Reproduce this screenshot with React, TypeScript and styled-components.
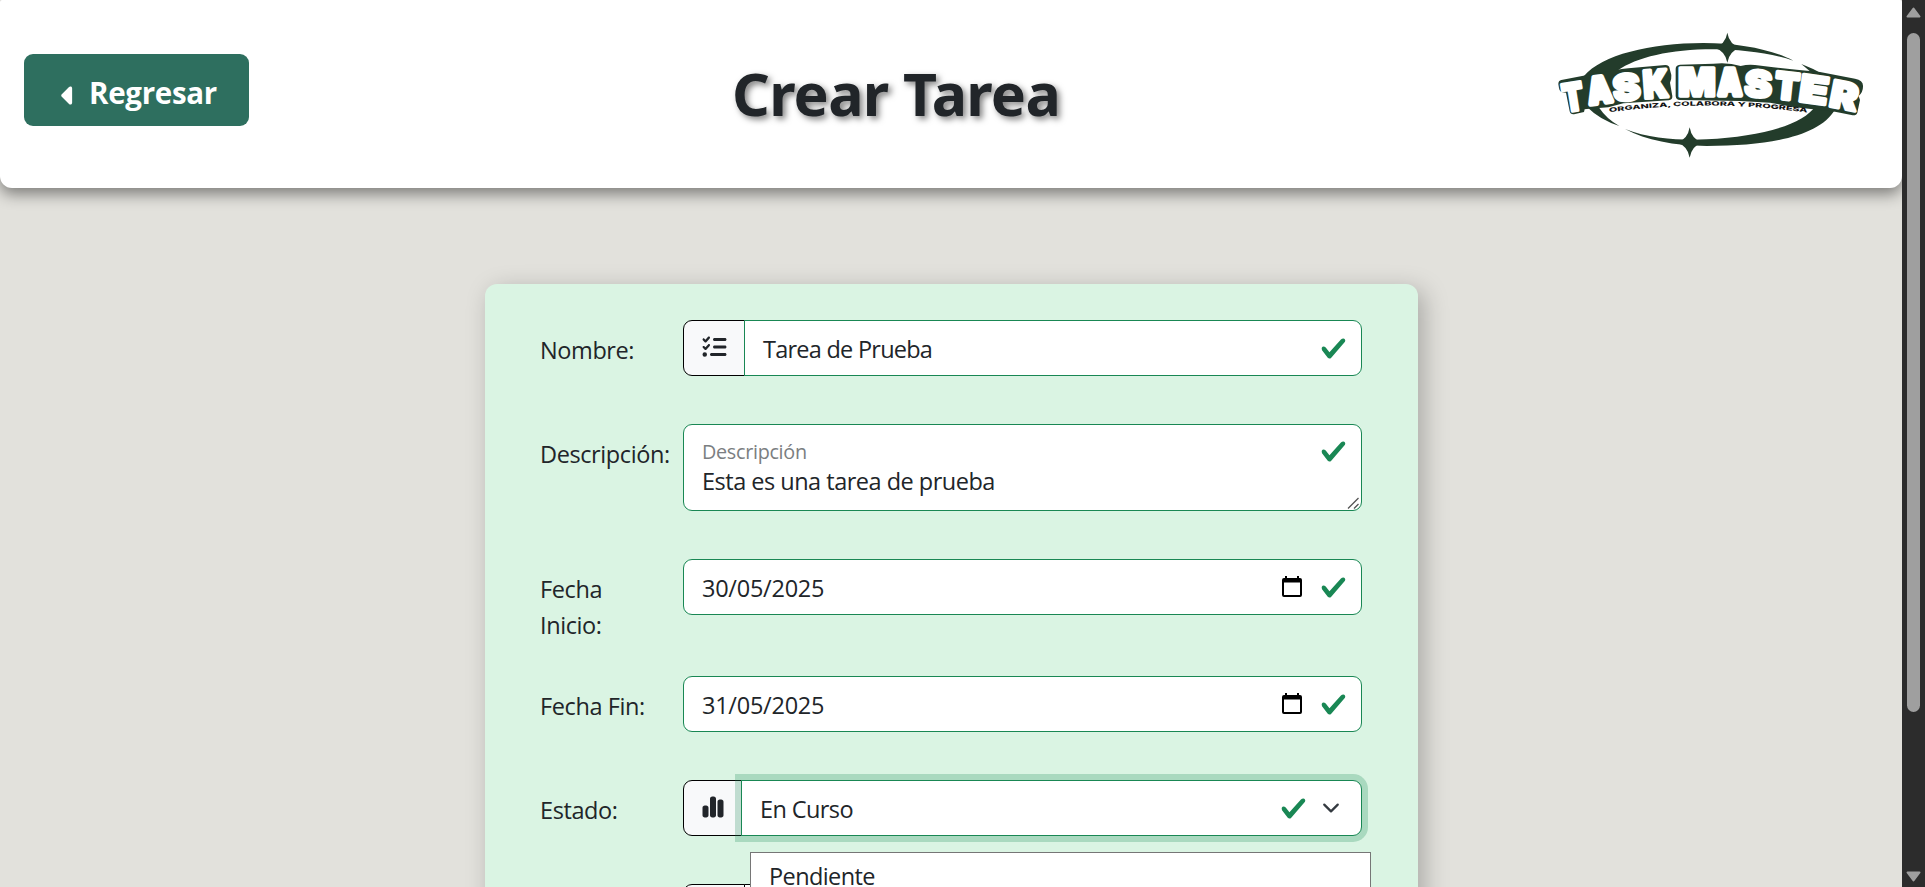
import React from 'react';
import styled, { createGlobalStyle, css } from 'styled-components';
import { FaCaretLeft, FaChartSimple, FaListCheck } from 'react-icons/fa6';

const GREEN = '#198754';
const INK = '#212529';
const LOGO_GREEN = '#233c2b';

const GlobalStyle = createGlobalStyle`
  *, *::before, *::after { box-sizing: border-box; }
  body {
    margin: 0;
    overflow: hidden;
    background: #e2e1dc;
    color: ${INK};
    font-family: 'Open Sans', 'Noto Sans', sans-serif;
    font-size: 23.5px;
    letter-spacing: -0.4px;
    line-height: 36px;
  }
`;

const Frame = styled.div`
  display: flex;
  height: 887px;
  overflow: hidden;
`;

const Page = styled.div`
  flex: 1;
  min-width: 0;
  overflow: hidden;
`;

const Header = styled.header`
  display: flex;
  align-items: center;
  justify-content: space-between;
  height: 188px;
  padding: 0 24px;
  background: #fff;
  border-radius: 2px 2px 12px 12px;
  box-shadow: 0 6px 15px rgba(0, 0, 0, 0.45);
`;

const BackButton = styled.button`
  display: flex;
  align-items: center;
  width: 225px;
  height: 72px;
  margin-top: -8px;
  padding: 4px 0 0 36px;
  border: 0;
  border-radius: 9px;
  background: #2e6f5f;
  color: #fff;
  font: 700 29.5px/45px 'Open Sans', sans-serif;
  letter-spacing: -0.3px;

  svg {
    width: 15px;
    height: 29px;
    margin: 6px 13px 0 1px;
  }
`;

const Title = styled.h1`
  margin: 0;
  padding-bottom: 3px;
  font: 700 59px/72px 'Noto Sans', sans-serif;
  letter-spacing: -0.7px;
  text-shadow: 3px 3px 6px rgba(0, 0, 0, 0.5);
`;

const LogoSvg = styled.svg`
  width: 335px;
  height: 140px;
`;

const LogoLetter = styled.text<{ $weight: number }>`
  font: 900 104px Inter, sans-serif;
  letter-spacing: 0;
  fill: #fff;
  stroke: #fff;
  stroke-width: ${(p) => p.$weight}px;
  stroke-linejoin: round;
`;

const Tagline = styled.text`
  font: 800 18px Inter, sans-serif;
  letter-spacing: 0;
  fill: #111;
`;

const Card = styled.form`
  width: 933px;
  height: 760px;
  margin: 96px 0 0 485px;
  padding: 36px 56px 0 55px;
  background: #daf4e3;
  border-radius: 12px;
  box-shadow: 6px 6px 24px rgba(0, 0, 0, 0.25);
`;

const Row = styled.div`
  display: flex;
  align-items: flex-start;
  margin-bottom: 24px;
`;

const Label = styled.label`
  width: 143px;
  padding: 12px 12px 9px 0;
  white-space: pre-line;
`;

const Control = styled.div`
  position: relative;
  display: flex;
  flex: 1;
  margin-bottom: 24px;
`;

const Addon = styled.span<{ $narrow?: boolean }>`
  display: flex;
  align-items: center;
  width: ${(p) => (p.$narrow ? 59 : 62)}px;
  height: 56px;
  margin-right: -1px;
  padding: 0 0 2px 18px;
  border: 1px solid #000;
  border-radius: 9px 0 0 9px;
  background: #f8f9fa;

  svg {
    width: ${(p) => (p.$narrow ? 22 : 25)}px;
    height: 24px;
  }
`;

const Field = styled.div<{ $joined?: boolean; $focused?: boolean; $plain?: boolean }>`
  position: relative;
  display: flex;
  flex: 1;
  align-items: center;
  height: 56px;
  padding: 0 14px 0 18px;
  border: 1px solid ${(p) => (p.$plain ? '#000' : GREEN)};
  border-radius: ${(p) => (p.$joined ? '0 9px 9px 0' : '9px')};
  background: #fff;
  ${(p) => p.$focused && css`box-shadow: 0 0 0 6px rgba(25, 135, 84, 0.25);`}
`;

const Value = styled.span<{ $tracking?: number }>`
  flex: 1;
  padding-top: 2px;
  letter-spacing: ${(p) => p.$tracking ?? -0.4}px;
`;

const TextArea = styled(Field)`
  align-items: flex-start;
  height: 87px;
  padding-top: 13px;
`;

const AreaText = styled.div`
  display: flex;
  flex: 1;
  flex-direction: column;
`;

const FloatingLabel = styled.span`
  color: #7b7e81;
  font-size: 19.8px;
  line-height: 28px;
  letter-spacing: -0.3px;
`;

const AreaValue = styled.span`
  line-height: 30px;
  letter-spacing: -0.5px;
`;

const Grip = styled.svg`
  position: absolute;
  right: 1px;
  bottom: 1px;
  width: 13px;
  height: 12px;
`;

const CheckSvg = styled.svg<{ $gap?: number }>`
  width: 27px;
  height: 27px;
  margin-right: ${(p) => p.$gap ?? 0}px;
`;

const CalendarSvg = styled.svg`
  width: 20px;
  height: 21px;
  margin: 0 18px 1px 0;
`;

const CaretSvg = styled.svg`
  width: 18px;
  height: 18px;
  margin-right: 7px;
`;

const Menu = styled.div`
  position: absolute;
  z-index: 2;
  top: 72px;
  left: 67px;
  width: 621px;
  height: 160px;
  padding: 5px 18px;
  border: 1px solid #767676;
  background: #fff;
  letter-spacing: -0.6px;
`;

const Track = styled.aside`
  display: flex;
  flex-direction: column;
  align-items: center;
  justify-content: space-between;
  width: 23px;
  padding: 7px 0 5px;
  background: #2c2c2c;
`;

const Thumb = styled.div`
  width: 13px;
  height: 679px;
  margin: 0 0 144px;
  border-radius: 7px;
  background: #9f9f9f;
`;

const ArrowSvg = styled.svg`
  width: 15px;
  height: 11px;
  fill: #9f9f9f;
  stroke: #9f9f9f;
  stroke-width: 2px;
  stroke-linejoin: round;
`;

const Check = ({ gap }: { gap?: number }) => (
  <CheckSvg $gap={gap} viewBox="0 0 8 8">
    <path
      fill={GREEN}
      d="M2.3 6.73.6 4.53c-.4-1.04.46-1.4 1.1-.8l1.1 1.4 3.4-3.8c.6-.63 1.6-.27 1.2.7l-4 4.6c-.43.5-.8.4-1.1.1z"
    />
  </CheckSvg>
);

const Calendar = () => (
  <CalendarSvg viewBox="0 0 20 21">
    <path
      fillRule="evenodd"
      d="M3 0h2v2h10V0h2v2h1a2 2 0 0 1 2 2v15a2 2 0 0 1-2 2H2a2 2 0 0 1-2-2V4a2 2 0 0 1 2-2h1zM2 6.500v12.500h16V6.500z"
    />
  </CalendarSvg>
);

// glyph, left edge, baseline, width, rotation, vertical stretch, stroke
const letters: [string, number, number, number, number, number, number][] = [
  ['T', 74, 277, 63, -9, 1.1, 9],
  ['A', 149, 253, 70, -8, 1.02, 16],
  ['S', 223, 245, 82, -6, 1.05, 9],
  ['K', 313, 235, 74, -4, 1.08, 11],
  ['M', 415, 227, 112, 0, 1.09, 9],
  ['A', 535, 225, 70, 0, 1.03, 16],
  ['S', 612, 229, 82, 3, 1.05, 9],
  ['T', 701, 234, 72, 6, 1.05, 11],
  ['E', 774, 243, 86, 8, 1.08, 9],
  ['R', 865, 258, 83, 11, 1.06, 9],
];

const Logo = () => (
  <LogoSvg viewBox="9 12 1005 420">
    <g fill={LOGO_GREEN}>
      <path d="M132 168C185 105 330 69 490 69C600 69 700 90 760 122C700 100 600 88 520 88C390 88 290 112 232 152L200 175Z" />
      <path d="M784 132Q818 145 848 162L815 158Z" />
      <path d="M142 262Q180 300 238 318Q200 297 178 264Z" />
      <path d="M255 327C330 358 430 361 500 358C660 350 790 315 826 258L884 270C840 345 700 378 500 378C400 376 320 362 255 327Z" />
      <path d="M562 38Q568 74 602 83Q568 92 562 128Q556 92 522 83Q556 74 562 38Z" />
      <path d="M449 322Q455 359 487 368Q455 377 449 413Q443 377 411 368Q443 359 449 322Z" />
      <path d="M55 192Q55 182 64 180L130 167Q150 162 165 162L225 151Q245 146 265 145L376 135Q388 135 389 146L394 165Q395 177 390 188L397 228Q398 239 386 241L250 250L205 262L148 266L134 268L132 276L102 283Q91 284 89 274L78 218L68 217Q59 216 57 204Z" />
      <path d="M407 146Q407 135 420 134L520 131Q565 126 602 138Q625 132 645 135L700 142L770 149L840 156L945 176Q969 181 969 197Q970 216 956 228L960 240L952 278Q949 287 938 286L885 275L760 261L690 248L600 243L420 240Q408 240 407 228Z" />
    </g>
    {letters.map(([glyph, x, y, width, angle, stretch, weight], i) => (
      <LogoLetter
        key={i}
        $weight={weight}
        transform={`translate(${x} ${y}) rotate(${angle}) scale(1 ${stretch})`}
        textLength={width}
        lengthAdjust="spacingAndGlyphs"
      >
        {glyph}
      </LogoLetter>
    ))}
    <path id="tagline-arc" d="M208 277Q500 236 802 278" fill="none" />
    <Tagline>
      <textPath href="#tagline-arc" textLength="596" lengthAdjust="spacingAndGlyphs">
        ORGANIZA, COLABORA Y PROGRESA
      </textPath>
    </Tagline>
  </LogoSvg>
);

const DateRow = ({ label, value }: { label: string; value: string }) => (
  <Row>
    <Label>{label}</Label>
    <Control>
      <Field>
        <Value $tracking={-0.25}>{value}</Value>
        <Calendar />
        <Check />
      </Field>
    </Control>
  </Row>
);

export default function App() {
  return (
    <Frame>
      <GlobalStyle />
      <Page>
        <Header>
          <BackButton type="button">
            <FaCaretLeft />
            Regresar
          </BackButton>
          <Title>Crear Tarea</Title>
          <Logo />
        </Header>
        <Card>
          <Row>
            <Label>Nombre:</Label>
            <Control>
              <Addon>
                <FaListCheck />
              </Addon>
              <Field $joined>
                <Value $tracking={-0.75}>Tarea de Prueba</Value>
                <Check />
              </Field>
            </Control>
          </Row>
          <Row>
            <Label>Descripción:</Label>
            <Control>
              <TextArea>
                <AreaText>
                  <FloatingLabel>Descripción</FloatingLabel>
                  <AreaValue>Esta es una tarea de prueba</AreaValue>
                </AreaText>
                <Check />
                <Grip viewBox="0 0 13 12">
                  <path d="M1 11.500L11.500 1M7 11.500L11.500 7" stroke="#555" strokeWidth="1.300" />
                </Grip>
              </TextArea>
            </Control>
          </Row>
          <DateRow label={'Fecha\nInicio:'} value="30/05/2025" />
          <DateRow label="Fecha Fin:" value="31/05/2025" />
          <Row>
            <Label>Estado:</Label>
            <Control>
              <Addon $narrow>
                <FaChartSimple />
              </Addon>
              <Field $joined $focused>
                <Value $tracking={-0.6}>En Curso</Value>
                <Check gap={15} />
                <CaretSvg viewBox="0 0 16 16">
                  <path
                    fill="none"
                    stroke="#343a40"
                    strokeLinecap="round"
                    strokeLinejoin="round"
                    strokeWidth="2"
                    d="m2 5 6 6 6-6"
                  />
                </CaretSvg>
              </Field>
              <Menu>Pendiente</Menu>
            </Control>
          </Row>
          <Row>
            <Label />
            <Control>
              <Addon />
              <Field $joined $plain />
            </Control>
          </Row>
        </Card>
      </Page>
      <Track>
        <ArrowSvg viewBox="0 0 15 11">
          <path d="M7.500 1.500L13.500 9.500H1.500Z" />
        </ArrowSvg>
        <Thumb />
        <ArrowSvg viewBox="0 0 15 11">
          <path d="M1.500 1.500H13.500L7.500 9.500Z" />
        </ArrowSvg>
      </Track>
    </Frame>
  );
}
